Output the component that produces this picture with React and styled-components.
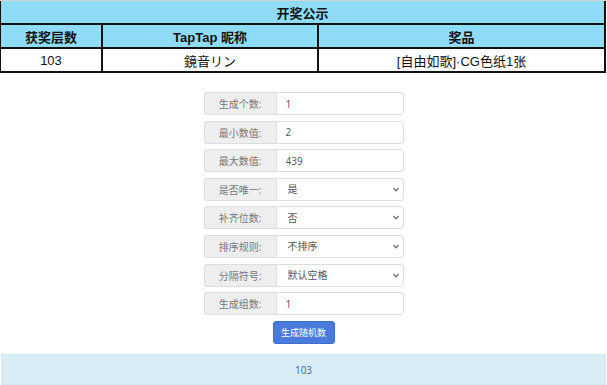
import styled, { createGlobalStyle } from "styled-components";

const GlobalStyle = createGlobalStyle`
  body {
    margin: 0;
    background: #fff;
    font-family: "Liberation Sans", "Noto Sans CJK SC", sans-serif;
  }
`;

const Page = styled.div`
  width: 607px;
  height: 385px;
  overflow: hidden;
  border-top: 1px solid #d4d4d4;
  box-sizing: border-box;
`;

const Table = styled.table`
  width: 607px;
  border-collapse: collapse;
  font-size: 13px;
  color: #111;
  margin-left: -1px;
`;

const Cell = styled.td`
  border: 2px solid #111;
  border-top: ${(p) => (p.$noTop ? "none" : "2px solid #111")};
  height: 22px;
  padding: 0;
  text-align: center;
  font-weight: ${(p) => (p.$bold ? "bold" : "normal")};
  background: ${(p) => (p.$head ? "#8fdcf8" : "#fff")};
  width: ${(p) => p.$w || "auto"};
`;

const Form = styled.div`
  margin: 19px auto 0;
  width: 200px;
  display: flex;
  flex-direction: column;
  gap: 5.6px;
  font-family: "Open Sans", "Noto Sans CJK SC", sans-serif;
  font-size: 10px;
`;

const Group = styled.div`
  display: flex;
  height: 23px;
`;

const Label = styled.div`
  width: 72px;
  flex: none;
  box-sizing: border-box;
  display: flex;
  align-items: center;
  justify-content: center;
  background: #eee;
  border: 1px solid #ddd;
  border-right: none;
  border-radius: 3px 0 0 3px;
  color: #777;
`;

const Input = styled.input`
  flex: 1;
  min-width: 0;
  box-sizing: border-box;
  border: 1px solid #ddd;
  border-radius: 0 3px 3px 0;
  padding: 0 9px;
  font: inherit;
  color: #555;
  outline: none;
`;

const SelectWrap = styled.div`
  flex: 1;
  min-width: 0;
  position: relative;
  display: flex;
`;

const Select = styled.select`
  flex: 1;
  min-width: 0;
  appearance: none;
  box-sizing: border-box;
  border: 1px solid #ddd;
  border-radius: 0 3px 3px 0;
  padding: 0 11px;
  font: inherit;
  color: #555;
  background: #fff;
  outline: none;
`;

const Caret = styled.svg`
  position: absolute;
  right: 5px;
  top: 9px;
  width: 6px;
  height: 5px;
  pointer-events: none;
`;

const Button = styled.button`
  align-self: center;
  margin-top: 0.5px;
  width: 62px;
  height: 23px;
  border: 1px solid #3e6fcf;
  border-radius: 3px;
  background: #4a7bdc;
  color: #fff;
  font: inherit;
  font-size: 9px;
  padding: 0;
`;

const Alert = styled.div`
  margin: 10px 1px 0;
  height: 31px;
  box-sizing: border-box;
  display: flex;
  align-items: center;
  justify-content: center;
  background: #d9edf7;
  border: 1px solid #cfe8f3;
  color: #31708f;
  font-family: "Open Sans", sans-serif;
  font-size: 10px;
`;

const fields = [
  { label: "生成个数:", value: "1" },
  { label: "最小数值:", value: "2" },
  { label: "最大数值:", value: "439" },
  { label: "是否唯一:", options: ["是", "否"] },
  { label: "补齐位数:", options: ["否", "是"] },
  { label: "排序规则:", options: ["不排序", "从小到大", "从大到小"] },
  { label: "分隔符号:", options: ["默认空格", "逗号", "换行"] },
  { label: "生成组数:", value: "1" },
];

export default function App() {
  return (
    <Page>
      <GlobalStyle />
      <Table>
        <tbody>
          <tr>
            <Cell $head $bold $noTop colSpan={3}>开奖公示</Cell>
          </tr>
          <tr>
            <Cell $head $bold $w="100px">获奖层数</Cell>
            <Cell $head $bold $w="214px">TapTap 昵称</Cell>
            <Cell $head $bold>奖品</Cell>
          </tr>
          <tr>
            <Cell>103</Cell>
            <Cell>鏡音リン</Cell>
            <Cell>[自由如歌]·CG色纸1张</Cell>
          </tr>
        </tbody>
      </Table>
      <Form>
        {fields.map((f) => (
          <Group key={f.label}>
            <Label>{f.label}</Label>
            {f.options ? (
              <SelectWrap>
                <Select defaultValue={f.options[0]}>
                  {f.options.map((o) => (
                    <option key={o}>{o}</option>
                  ))}
                </Select>
                <Caret viewBox="0 0 6 5">
                  <path d="M0.5 1 L3 3.8 L5.5 1" fill="none" stroke="#666" strokeWidth="1.2" />
                </Caret>
              </SelectWrap>
            ) : (
              <Input defaultValue={f.value} />
            )}
          </Group>
        ))}
        <Button>生成随机数</Button>
      </Form>
      <Alert>103</Alert>
    </Page>
  );
}
